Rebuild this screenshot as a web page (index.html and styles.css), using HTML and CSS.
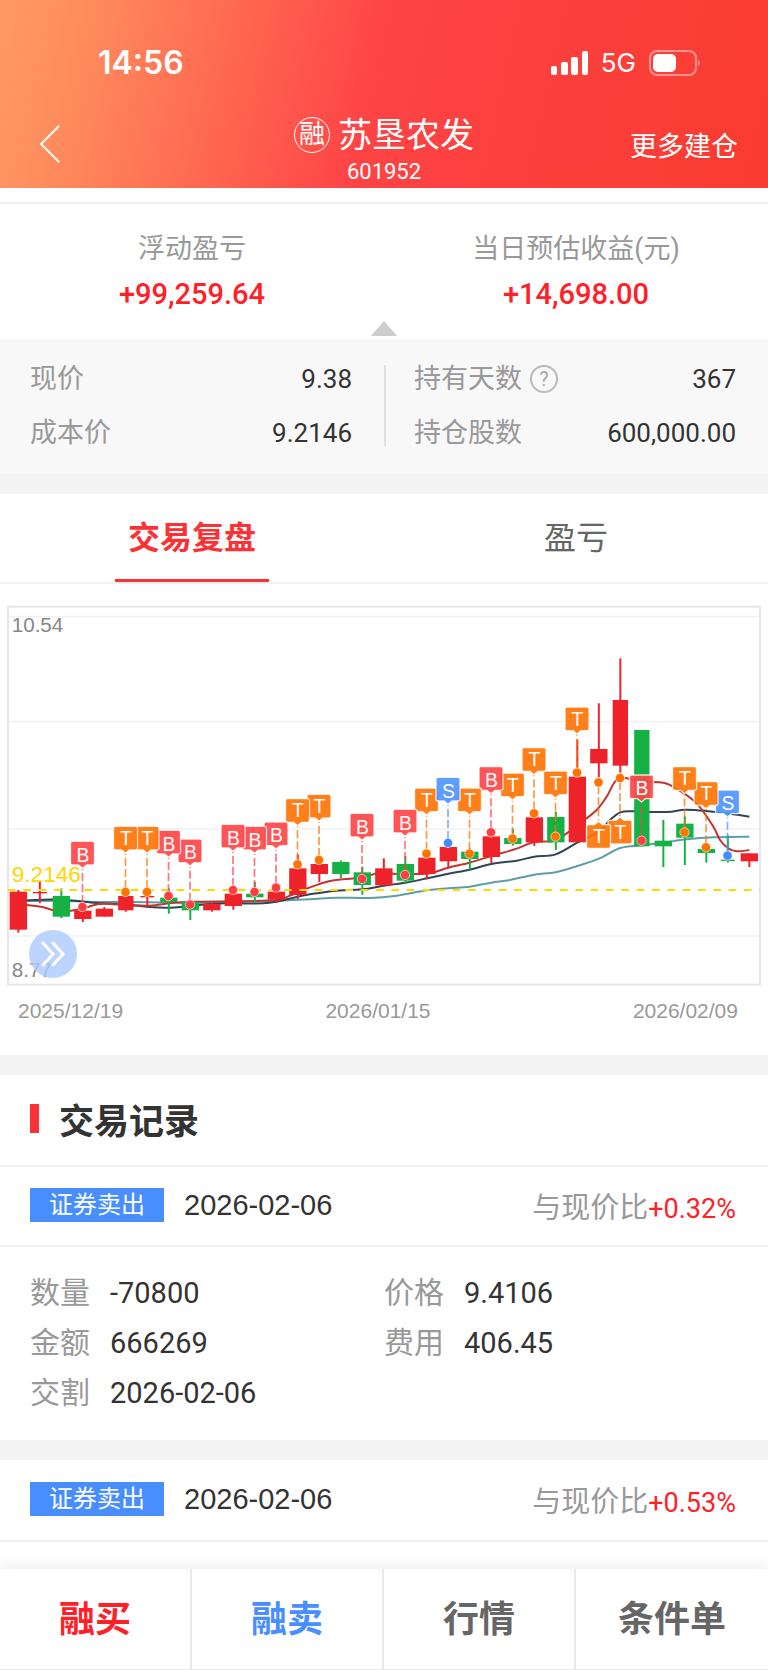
FILE: index.html
```html
<!DOCTYPE html>
<html lang="zh-CN">
<head>
<meta charset="utf-8">
<meta name="viewport" content="width=device-width, initial-scale=1">
<title>苏垦农发 601952</title>
<link rel="stylesheet" href="styles.css">
</head>
<body>
<header class="header">
  <div class="status">
    <span class="clock">14:56</span>
    <div class="status-icons">
      <svg class="signal" viewBox="0 0 38 24" aria-hidden="true">
        <rect x="0" y="15" width="6" height="9" rx="2"/><rect x="10" y="11" width="7" height="13" rx="2"/><rect x="20" y="6" width="7" height="18" rx="2"/><rect x="31" y="0" width="6" height="24" rx="2"/>
      </svg>
      <span class="network">5G</span>
      <svg class="battery" viewBox="0 0 52 26" aria-hidden="true">
        <rect x="1" y="1" width="46" height="24" rx="7" fill="none" stroke="#fff" stroke-opacity=".45" stroke-width="2"/>
        <rect x="4" y="4" width="23" height="18" rx="5" fill="#fff"/>
        <path d="M49 9.500q3 3.500 0 7z" fill="#fff" fill-opacity=".5"/>
      </svg>
    </div>
  </div>
  <div class="navbar">
    <button class="back" type="button" aria-label="返回">
      <svg viewBox="0 0 22 38" aria-hidden="true"><path d="M20 1 2 19l18 18"/></svg>
    </button>
    <div class="stock">
      <h1 class="stock-name"><span class="margin-mark">融</span>苏垦农发</h1>
      <span class="stock-code">601952</span>
    </div>
    <button class="more" type="button">更多建仓</button>
  </div>
</header>

<main class="content">
  <section class="summary">
    <div class="summary-item"><span class="label">浮动盈亏</span><strong class="gain">+99,259.64</strong></div>
    <div class="summary-item"><span class="label">当日预估收益(元)</span><strong class="gain">+14,698.00</strong></div>
    <svg class="collapse" viewBox="0 0 26 15" aria-hidden="true"><path d="M13 0 26 15H0z"/></svg>
  </section>

  <section class="details">
    <dl class="detail-col">
      <div class="detail"><dt>现价</dt><dd>9.38</dd></div>
      <div class="detail"><dt>成本价</dt><dd>9.2146</dd></div>
    </dl>
    <dl class="detail-col">
      <div class="detail"><dt>持有天数 <button class="help" type="button" aria-label="说明">?</button></dt><dd>367</dd></div>
      <div class="detail"><dt>持仓股数</dt><dd>600,000.00</dd></div>
    </dl>
  </section>

  <div class="tabs" role="tablist">
    <button class="tab tab-active" type="button" role="tab" aria-selected="true">交易复盘</button>
    <button class="tab" type="button" role="tab" aria-selected="false">盈亏</button>
  </div>

  <section class="chart">
    <svg class="plot" id="plot" viewBox="0 0 2304 1164" role="img" aria-label="K线图"></svg>
    <button class="expand" type="button" aria-label="展开">
      <svg viewBox="0 0 24 26" aria-hidden="true"><path d="M2 2 12 13 2 24M12 2 22 13 12 24"/></svg>
    </button>
    <div class="dates"><span>2025/12/19</span><span>2026/01/15</span><span>2026/02/09</span></div>
  </section>

  <section class="records">
    <h2 class="records-title">交易记录</h2>
    <article class="record">
      <header class="record-head">
        <span class="badge">证券卖出</span><time class="record-date">2026-02-06</time>
        <span class="compare">与现价比<b>+0.32%</b></span>
      </header>
      <dl class="record-body">
        <div class="field"><dt>数量</dt><dd>-70800</dd></div>
        <div class="field"><dt>价格</dt><dd>9.4106</dd></div>
        <div class="field"><dt>金额</dt><dd>666269</dd></div>
        <div class="field"><dt>费用</dt><dd>406.45</dd></div>
        <div class="field"><dt>交割</dt><dd>2026-02-06</dd></div>
      </dl>
    </article>
    <article class="record">
      <header class="record-head">
        <span class="badge">证券卖出</span><time class="record-date">2026-02-06</time>
        <span class="compare">与现价比<b>+0.53%</b></span>
      </header>
    </article>
  </section>
</main>

<nav class="actions">
  <button class="action buy" type="button">融买</button>
  <button class="action sell" type="button">融卖</button>
  <button class="action" type="button">行情</button>
  <button class="action" type="button">条件单</button>
</nav>
<script src="chart.js"></script>
</body>
</html>
```

FILE: styles.css
```css
* { box-sizing: border-box; }

body {
  margin: 0;
  min-height: 100vh;
  display: flex;
  flex-direction: column;
  background: #fff;
  color: #333;
  font-family: Roboto, "Noto Sans CJK SC", sans-serif;
  font-size: 27px;
}

button {
  padding: 0;
  border: 0;
  background: none;
  color: inherit;
  font: inherit;
}

h1, h2, dl, dd { margin: 0; }

/* Header */
.header {
  height: 188px;
  color: #fff;
  background: linear-gradient(103deg, #ff9a64 0%, #ff8a5c 12%, #fe4345 49%, #f93b30 100%);
}

.status {
  display: flex;
  justify-content: space-between;
  align-items: center;
  padding: 43px 67px 0 98px;
}

.clock { font: 600 32px/40px Inter, sans-serif; }
.status-icons { display: flex; align-items: center; }
.signal { width: 38px; height: 24px; fill: #fff; }
.network { margin: 0 13px 0 12px; font: 400 26px/40px Inter, sans-serif; }
.battery { width: 52px; height: 26px; }

.navbar {
  display: grid;
  grid-template-columns: 1fr auto 1fr;
  align-items: center;
  height: 104px;
  padding: 4px 30px 0;
}

.back { justify-self: start; width: 32px; height: 38px; margin-top: 14px; padding-left: 9px; }
.back svg { display: block; width: 22px; height: 38px; fill: none; stroke: #fff; stroke-width: 2; }
.stock { display: flex; flex-direction: column; align-items: center; padding-top: 21px; }
.stock-name { display: flex; align-items: center; gap: 8px; font-size: 34px; font-weight: 400; line-height: 48px; }

.margin-mark {
  width: 36px;
  height: 36px;
  border: 1px solid #fff;
  border-radius: 50%;
  font-size: 26px;
  line-height: 33px;
  text-align: center;
}

.stock-code { font-size: 22px; line-height: 26px; }
.more { justify-self: end; margin-top: 20px; line-height: 40px; }

/* Profit summary */
.summary {
  position: relative;
  display: grid;
  grid-template-columns: 1fr 1fr;
  height: 137px;
  margin-top: 14px;
  padding-top: 24px;
  border-top: 2px solid #efefef;
}

.summary-item { display: flex; flex-direction: column; align-items: center; }
.label { color: #999; line-height: 42px; }
.gain { color: #ff2028; font-size: 29px; font-weight: 500; line-height: 48px; }
.collapse { position: absolute; bottom: 3px; left: calc(50% - 13px); width: 26px; height: 15px; fill: #ccc; }

/* Position details */
.details {
  display: grid;
  grid-template-columns: 1fr 1fr;
  padding: 26px 0 24px;
  background: #f8f8f8;
  border-bottom: 20px solid #f4f4f4;
}

.detail-col { padding: 0 32px 5px 30px; }
.detail-col + .detail-col { position: relative; }
.detail-col + .detail-col::before { content: ""; position: absolute; left: 0; top: 0; width: 2px; height: 81px; background: #e0e0e0; }
.detail { display: flex; justify-content: space-between; height: 54px; line-height: 28px; }
.detail + .detail { height: 26px; }
.detail dt { display: flex; align-items: center; gap: 8px; height: 28px; color: #999; }
.detail dd { font-size: 26px; }
.help { width: 28px; height: 28px; border: 2px solid #bbb; border-radius: 50%; color: #aaa; font-size: 20px; line-height: 24px; }

/* Tabs */
.tabs { display: grid; grid-template-columns: 1fr 1fr; height: 90px; border-bottom: 2px solid #f2f2f2; }
.tab { position: relative; padding-bottom: 1px; color: #666; font-size: 32px; line-height: 40px; }
.tab-active { color: #fa3235; font-weight: 700; }
.tab-active::after { content: ""; position: absolute; bottom: 0; left: 30%; width: 40%; height: 3px; background: #fa3235; }

/* Chart */
.chart { position: relative; padding-top: 16px; border-bottom: 20px solid #f4f4f4; }
.plot { display: block; width: 100%; height: auto; font-family: "Liberation Sans", Arial, sans-serif; }
.expand { position: absolute; left: 29px; bottom: 77px; width: 48px; height: 48px; border-radius: 50%; background: rgba(173, 203, 255, .82); }
.expand svg { display: block; width: 24px; height: 26px; margin: 0 auto; fill: none; stroke: #fff; stroke-width: 3; stroke-linecap: round; }
.dates {
  display: flex;
  justify-content: space-between;
  padding: 9px 30px 30px 18px;
  color: #999;
  font: 21px/28px "Liberation Sans", Arial, sans-serif;
}

/* Trade records */
.records-title { display: flex; align-items: center; gap: 20px; height: 90px; padding: 0 0 3px 30px; font-size: 35px; font-weight: 700; }
.records-title::before { content: ""; width: 9px; height: 29px; background: #fa3235; }
.record + .record { border-top: 20px solid #f4f4f4; }
.record-head { display: flex; align-items: center; height: 82px; padding: 0 32px 2px 30px; border-bottom: 2px solid #efefef; }
.records-title + .record .record-head { border-top: 2px solid #efefef; }
.badge { width: 134px; background: #488eff; color: #fff; font-size: 24px; line-height: 34px; text-align: center; }
.record-date { margin-left: 20px; font: 29px/40px "Liberation Sans", Arial, sans-serif; }
.compare { margin: 6px 0 0 auto; color: #999; font-size: 29px; line-height: 40px; }
.compare b { color: #ff2028; font-size: 27px; font-weight: 400; }
.record-body { display: grid; grid-template-columns: 354px 1fr; row-gap: 10px; padding: 26px 32px 27px 30px; font-size: 29px; line-height: 40px; }
.field { display: flex; gap: 20px; }
.field dt { color: #999; font-size: 30px; }

/* Bottom actions */
.actions {
  position: sticky;
  bottom: 0;
  display: grid;
  grid-template-columns: repeat(4, 1fr);
  height: 101px;
  margin-top: auto;
  background: #fff;
  border-bottom: 1px solid #e8e8e8;
  box-shadow: 0 -2px 14px rgba(0, 0, 0, .08);
}

.action { padding-bottom: 7px; border-right: 2px solid #e8e8e8; color: #666; font-size: 36px; font-weight: 700; }
.action:last-child { border-right: 0; }
.buy { color: #ff2028; }
.sell { color: #488eff; }
```

FILE: chart.js
```js
// Plot units are a third of a pixel at the base width.
const plot = document.getElementById("plot");
const FIRST = 55, STEP = 64.5;
const RED = "#ee2229", GREEN = "#15b144";

// [colour, body top, body bottom, high, low]
const candles = [
  ["R",875,989,870,998],["R",876,880,843,909],["G",888,950,865,954],["R",932,957,925,966],
  ["R",926,950,921,950],["R",888,931,884,935],["R",888,892,875,917],["G",893,906,865,941],
  ["G",906,931,906,960],["R",912,931,908,935],["R",881,918,870,929],["G",881,892,846,909],
  ["R",875,899,850,908],["R",805,885,763,897],["R",792,822,780,846],["G",786,822,781,834],
  ["G",817,855,800,884],["R",805,856,775,858],["G",792,842,768,851],["R",773,822,760,838],
  ["R",741,784,730,805],["G",755,777,744,809],["R",709,771,697,790],["G",714,732,687,737],
  ["R",652,727,640,738],["G",651,727,635,750],["R",530,727,418,727],["R",447,490,310,532],
  ["R",300,497,175,518],["G",390,739,390,739],["G",722,739,660,801],["G",671,713,649,795],
  ["G",747,759,727,788],["G",779,783,706,788],["R",760,784,760,801]
];

// [candle index, kind, price y, label below]
const trades = [
  [3,"B",921],[5,"T",876],[6,"T",876],[7,"B",888],[8,"B",914],[10,"B",870],[11,"B",876],
  [12,"B",863],[13,"T",793],[14,"T",780],[16,"B",837],[18,"B",825],[19,"T",761],[21,"T",761],
  [22,"B",697],[23,"T",716],[24,"T",640],[25,"T",710],[26,"T",518],[27,"T",547,1],[28,"T",534,1],
  [29,"B",722],[31,"T",697],[32,"T",742],[33,"S",767],[20,"S",729]
];
const fills = { B: ["#ff4649", "#ff3d43"], T: ["#ff7508", "#ff7300"], S: ["#5094ff", "#438bff"] };

const averages = [
  ["#5e9fa7", [[55,903],[180,902],[280,906],[400,906],[560,908],[700,907],[750,904],[830,902],[930,898],[1010,893],[1110,894],[1190,887],[1281,871],[1345,865],[1409,860],[1474,848],[1530,840],[1603,824],[1667,817],[1732,798],[1797,776],[1861,744],[1926,736],[1990,728],[2060,718],[2140,712],[2248,710]]],
  ["#2f4554", [[55,902],[130,899],[200,900],[280,908],[380,914],[440,920],[510,923],[560,919],[640,911],[700,910],[790,910],[830,905],[893,890],[950,880],[1010,872],[1087,868],[1152,857],[1216,848],[1281,835],[1345,821],[1409,809],[1474,792],[1550,782],[1603,770],[1667,763],[1732,728],[1797,695],[1830,660],[1861,637],[1900,634],[2000,636],[2055,629],[2120,633],[2200,643],[2248,650]]],
  ["#c23531", [[55,913],[80,915],[130,922],[180,935],[240,928],[300,912],[380,915],[450,917],[520,908],[600,905],[700,904],[829,900],[870,887],[930,862],[990,843],[1050,836],[1087,833],[1130,820],[1152,817],[1190,822],[1250,822],[1290,820],[1345,803],[1409,788],[1474,768],[1550,746],[1600,727],[1667,722],[1700,700],[1740,670],[1790,630],[1820,590],[1845,545],[1870,533],[1926,545],[1990,548],[2030,566],[2090,610],[2140,680],[2160,720],[2185,745],[2210,754],[2248,750]]]
];

const line = (x1, y1, x2, y2, c, w, extra = "") =>
  `<line x1="${x1}" y1="${y1}" x2="${x2}" y2="${y2}" stroke="${c}" stroke-width="${w}" ${extra}/>`;

function smooth(p) {
  let d = `M${p[0]}`;
  for (let i = 0; i < p.length - 1; i++) {
    const a = p[i - 1] || p[i], b = p[i], c = p[i + 1], e = p[i + 2] || c;
    d += `C${b[0] + (c[0] - a[0]) / 6} ${b[1] + (c[1] - a[1]) / 6} ${c[0] - (e[0] - b[0]) / 6} ${c[1] - (e[1] - b[1]) / 6} ${c}`;
  }
  return d;
}

let out = [50, 365, 687, 1008].map(y => line(24, y, 2280, y, "#f1f1f7", 5)).join("");
out += `<rect x="24" y="20" width="2256" height="1134" fill="none" stroke="#e6e7ec" stroke-width="6"/>`;
out += `<text x="35" y="97" font-size="62" fill="#888">10.54</text><text x="35" y="1130" font-size="62" fill="#888">8.77</text>`;
for (const [c, pts] of averages) out += `<path d="${smooth(pts)}" fill="none" stroke="${c}" stroke-width="6"/>`;

candles.forEach(([k, top, bottom, high, low], i) => {
  const x = FIRST + STEP * i, c = k === "R" ? RED : GREEN;
  out += line(x, high, x, low, c, 6);
  const w = [5, 28, 29].includes(i) ? 46 : i === 1 || i === 6 || i === 33 ? 42 : 52;
  out += `<rect x="${x - w / 2}" y="${top}" width="${w}" height="${bottom - top}" fill="${c}"/>`;
});

out += line(24, 870, 2280, 870, "#ffd800", 6, 'stroke-dasharray="23 23"');
out += `<text x="35" y="847" font-size="68" fill="#ffd500">9.2146</text>`;

const ordered = trades.slice(0, -1).reverse().concat(trades.slice(-1));
for (const [i, kind, y, below] of ordered) {
  const x = FIRST + STEP * i - 1, [fill, dot] = fills[kind];
  const flip = below ? -1 : 1, top = below ? y + 127 : y - 197;
  out += line(x, y - 12 * flip, x, y - 114 * flip, fill, 5, 'stroke-dasharray="24 9" opacity=".75"');
  const box = below
    ? `M${x - 30} ${top}h18l12-10 12 10h18q6 0 6 6v59q0 6-6 6h-60q-6 0-6-6v-59q0-6 6-6z`
    : `M${x - 30} ${top}h60q6 0 6 6v59q0 6-6 6h-18l-12 10-12-10h-18q-6 0-6-6v-59q0-6 6-6z`;
  out += `<path d="${box}" fill="${fill}" fill-opacity=".92" stroke="#fff" stroke-opacity=".8" stroke-width="4"/>`;
  out += `<text x="${x + 1}" y="${top + 61 - (kind === "T" ? 5 : 0)}" font-size="58" fill="#fff" text-anchor="middle">${kind}</text>`;
  out += `<circle cx="${x}" cy="${y}" r="14" fill="${dot}" stroke="#fff" stroke-opacity=".6" stroke-width="3"/>`;
}
plot.innerHTML = out;
```
